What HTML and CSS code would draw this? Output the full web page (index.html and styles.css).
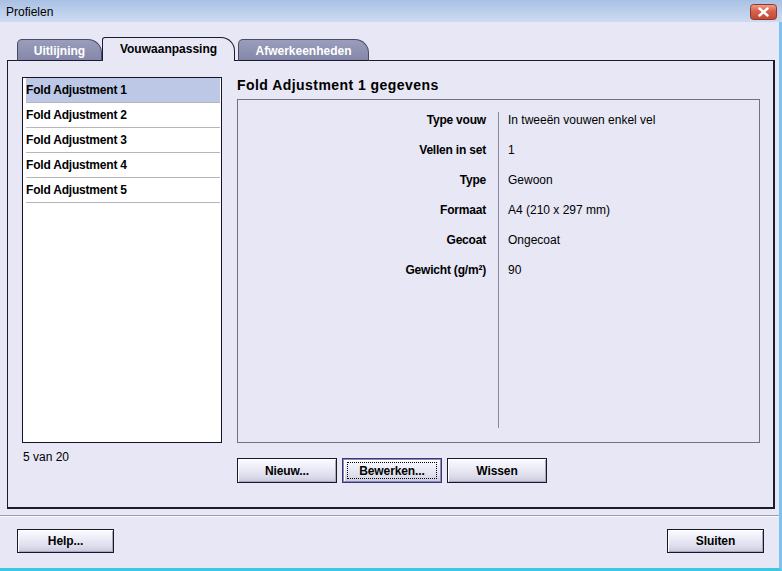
FILE: index.html
```html
<!DOCTYPE html>
<html>
<head>
<meta charset="utf-8">
<link rel="stylesheet" href="styles.css">
</head>
<body>
<div class="window">
  <div class="titlebar">
    <span class="title">Profielen</span>
    <span class="close">
      <svg width="27" height="16" viewBox="0 0 27 16">
        <defs>
          <linearGradient id="cg" x1="0" y1="0" x2="0" y2="1">
            <stop offset="0" stop-color="#f0a090"/>
            <stop offset="0.45" stop-color="#d8604a"/>
            <stop offset="1" stop-color="#c04a34"/>
          </linearGradient>
        </defs>
        <rect x="0.5" y="0.5" width="26" height="15" rx="3" fill="url(#cg)" stroke="#8a3a2a"/>
        <path d="M9.5 4.5 L17.5 11.5 M17.5 4.5 L9.5 11.5" stroke="#fff" stroke-width="2.4" stroke-linecap="round"/>
      </svg>
    </span>
  </div>
  <div class="client">
    <div class="tabs">
      <div class="tab-edge"></div>
      <div class="tab">Uitlijning</div>
      <div class="tab active">Vouwaanpassing</div>
      <div class="tab-gap"></div>
      <div class="tab tab-wide">Afwerkeenheden</div>
      <div class="tab-fill"></div>
    </div>
    <div class="panel">
      <div class="left">
        <ul class="list">
          <li class="item selected">Fold Adjustment 1</li>
          <li class="item">Fold Adjustment 2</li>
          <li class="item">Fold Adjustment 3</li>
          <li class="item">Fold Adjustment 4</li>
          <li class="item">Fold Adjustment 5</li>
        </ul>
        <div class="count">5 van 20</div>
      </div>
      <div class="right">
        <h2 class="heading">Fold Adjustment 1 gegevens</h2>
        <div class="details">
          <div class="labels">
            <div class="row">Type vouw</div>
            <div class="row">Vellen in set</div>
            <div class="row">Type</div>
            <div class="row">Formaat</div>
            <div class="row">Gecoat</div>
            <div class="row">Gewicht (g/m²)</div>
          </div>
          <div class="divider"></div>
          <div class="values">
            <div class="row">In tweeën vouwen enkel vel</div>
            <div class="row">1</div>
            <div class="row">Gewoon</div>
            <div class="row">A4 (210 x 297 mm)</div>
            <div class="row">Ongecoat</div>
            <div class="row">90</div>
          </div>
        </div>
        <div class="actions">
          <button class="btn">Nieuw...</button>
          <button class="btn focused"><span class="focus-ring">Bewerken...</span></button>
          <button class="btn">Wissen</button>
        </div>
      </div>
    </div>
    <div class="sep"></div>
    <div class="footer">
      <button class="btn btn-small">Help...</button>
      <button class="btn btn-small">Sluiten</button>
    </div>
  </div>
</div>
</body>
</html>
```
FILE: styles.css
```css
* { box-sizing: border-box; }
html, body { margin: 0; padding: 0; }
body {
  width: 782px;
  height: 571px;
  overflow: hidden;
  background: #e7e7f5;
  font-family: "Liberation Sans", Arial, sans-serif;
  font-size: 12px;
  color: #000;
}
.window {
  width: 782px;
  height: 571px;
  display: flex;
  flex-direction: column;
}
.titlebar {
  height: 22px;
  flex: none;
  display: flex;
  align-items: center;
  justify-content: space-between;
  padding: 1px 5px 0 6px;
  background: linear-gradient(#a9c0e4, #c3d4ee 70%, #cddbf0);
}
.title {
  font-size: 12px;
  color: #000;
}
.close {
  display: flex;
  margin-top: 0;
}
.client {
  flex: 1;
  display: flex;
  flex-direction: column;
  padding: 15px 4px 0 7px;
  border-left: 2px solid #d8d8e6;
  border-right: 3px solid #7cc2ee;
  border-bottom: 3px solid #3cc8e2;
  margin-left: -2px;
}
.tabs {
  display: flex;
  align-items: flex-end;
  height: 24px;
}
.tab-edge {
  width: 10px;
  height: 1px;
  background: #1c1c2c;
}
.tab-gap {
  width: 3px;
  height: 1px;
  background: #1c1c2c;
}
.tab-fill {
  flex: 1;
  height: 1px;
  background: #1c1c2c;
}
.tab {
  width: 85px;
  height: 22px;
  background: linear-gradient(#9a9ebc, #8487a8);
  color: #fff;
  font-weight: bold;
  font-size: 12px;
  display: flex;
  align-items: center;
  justify-content: center;
  padding-top: 1px;
  border: 1px solid #4a4a62;
  border-bottom: 1px solid #1c1c2c;
  border-radius: 5px 14px 0 0;
}
.tab.tab-wide { width: 131px; }
.tab.active {
  width: 133px;
  height: 24px;
  background: #e7e7f5;
  color: #000;
  border: 1px solid #1c1c2c;
  border-bottom: none;
  border-radius: 3px 14px 0 0;
  padding-top: 0;
  padding-bottom: 2px;
}
.panel {
  display: flex;
  gap: 15px;
  border-left: 1px solid #1c1c2c;
  border-right: 2px solid #1c1c2c;
  border-bottom: 2px solid #1c1c2c;
  padding: 16px 13px 24px 14px;
  height: 448px;
}
.left {
  width: 200px;
  display: flex;
  flex-direction: column;
}
.list {
  list-style: none;
  margin: 0;
  padding: 0 1px 0 3px;
  height: 366px;
  background: #fff;
  border: 1px solid #141424;
}
.item {
  height: 25px;
  line-height: 24px;
  font-weight: bold;
  letter-spacing: -0.2px;
  border-bottom: 1px solid #b4b4bc;
  white-space: nowrap;
}
.item.selected {
  background: #bcc8e6;
}
.count {
  margin-top: 7px;
  line-height: 14px;
  padding-left: 1px;
}
.right {
  flex: 1;
  display: flex;
  flex-direction: column;
}
.heading {
  margin: 0;
  height: 22px;
  line-height: 17px;
  font-size: 14px;
  font-weight: bold;
  letter-spacing: 0.45px;
}
.details {
  height: 344px;
  border: 1px solid #70708a;
  display: flex;
}
.labels {
  width: 248px;
  padding-top: 5px;
  text-align: right;
  font-weight: bold;
  letter-spacing: -0.2px;
}
.divider {
  width: 1px;
  background: #8a8a9a;
  margin: 12px 9px 14px 12px;
}
.values {
  flex: 1;
  padding-top: 5px;
}
.row {
  height: 30px;
  line-height: 30px;
  white-space: nowrap;
}
.actions {
  margin-top: 15px;
  display: flex;
  gap: 5px;
}
.btn {
  width: 100px;
  height: 25px;
  padding: 0;
  font-family: "Liberation Sans", Arial, sans-serif;
  font-size: 12px;
  font-weight: bold;
  letter-spacing: -0.1px;
  color: #000;
  border: 1px solid #181828;
  background: linear-gradient(#fafaff 0%, #eeeef8 35%, #dcdcec 75%, #c8c8dc 100%);
  box-shadow: inset 1px 1px 0 #ffffff, inset -1px -1px 0 #a8a8c0;
  display: flex;
  align-items: center;
  justify-content: center;
}
.btn.focused {
  border-color: #3a3a6a;
  box-shadow: inset 0 0 0 1px #8a8ac0, inset 2px 2px 0 #ffffff;
}
.focus-ring {
  display: flex;
  align-items: center;
  justify-content: center;
  width: 90px;
  height: 17px;
  border: 1px dotted #000;
}
.sep {
  margin-top: 6px;
  height: 2px;
  border-top: 1px solid #9c9cac;
  border-bottom: 1px solid #f8f8ff;
  margin-left: -7px;
  margin-right: -4px;
}
.footer {
  display: flex;
  justify-content: space-between;
  padding: 12px 11px 0 10px;
}
.btn.btn-small {
  width: 97px;
  height: 24px;
}
```
